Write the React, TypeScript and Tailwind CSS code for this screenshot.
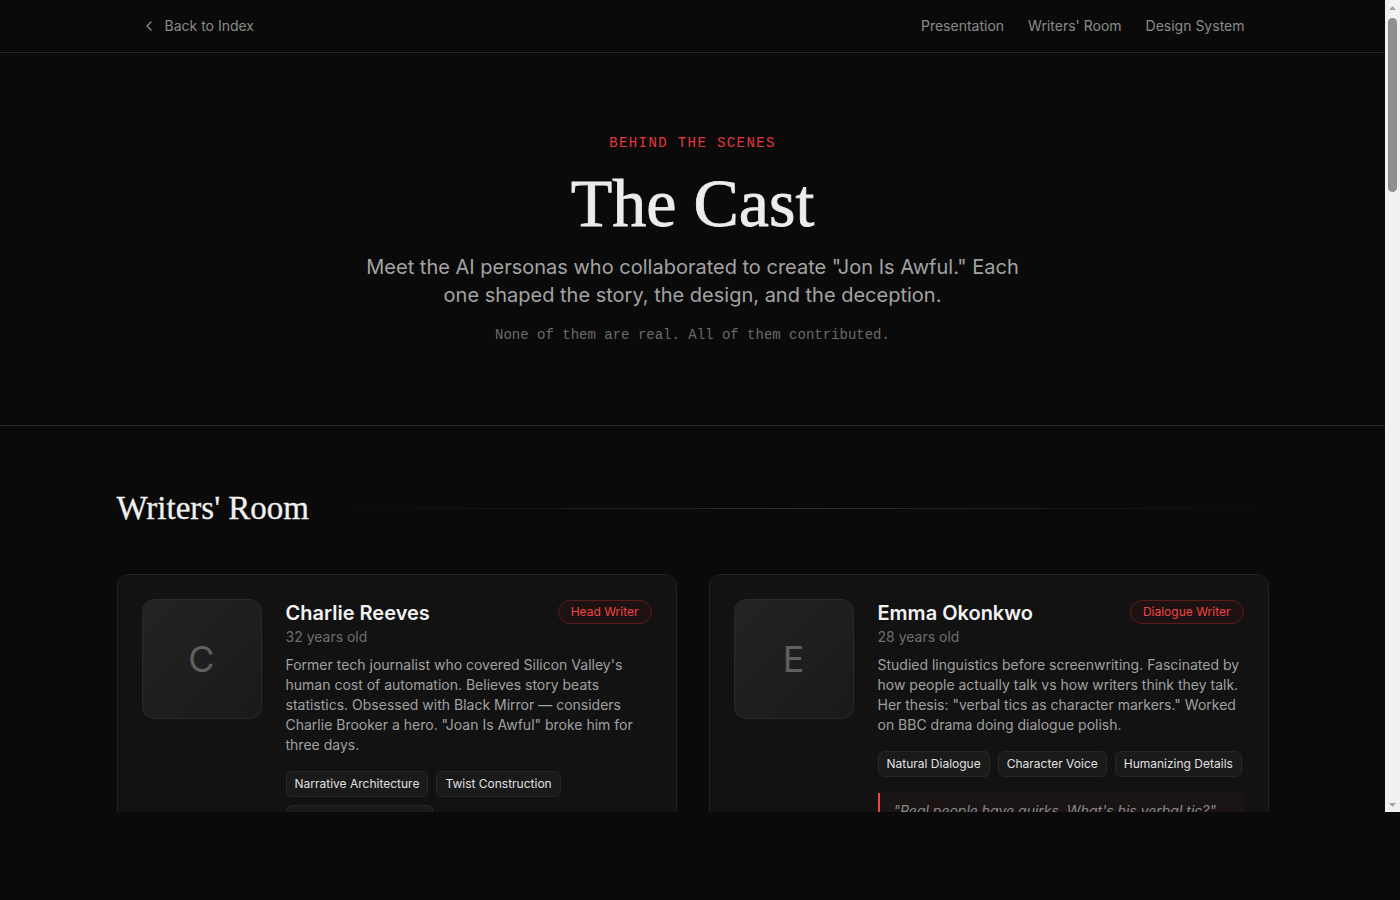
import { ChevronLeft } from "lucide-react";

type Persona = {
  initial: string;
  name: string;
  age: number;
  role: string;
  bio: string;
  skills: string[];
  quote: string;
};

const WRITERS: Persona[] = [
  {
    initial: "C",
    name: "Charlie Reeves",
    age: 32,
    role: "Head Writer",
    bio: 'Former tech journalist who covered Silicon Valley\'s human cost of automation. Believes story beats statistics. Obsessed with Black Mirror — considers Charlie Brooker a hero. "Joan Is Awful" broke him for three days.',
    skills: ["Narrative Architecture", "Twist Construction", "Audience Manipulation"],
    quote: '"What if the audience is the one being watched?"',
  },
  {
    initial: "E",
    name: "Emma Okonkwo",
    age: 28,
    role: "Dialogue Writer",
    bio: 'Studied linguistics before screenwriting. Fascinated by how people actually talk vs how writers think they talk. Her thesis: "verbal tics as character markers." Worked on BBC drama doing dialogue polish.',
    skills: ["Natural Dialogue", "Character Voice", "Humanizing Details"],
    quote: '"Real people have quirks. What\'s his verbal tic?"',
  },
  {
    initial: "M",
    name: "Marcus Hale",
    age: 41,
    role: "Story Editor",
    bio: "Spent a decade in network television rooms before going independent. Cuts scenes without mercy and defends the ones that matter. Keeps a wall of index cards for every episode.",
    skills: ["Structure", "Pacing", "Scene Economy"],
    quote: '"If it doesn\'t turn, it goes."',
  },
  {
    initial: "P",
    name: "Priya Shah",
    age: 35,
    role: "Research Lead",
    bio: "Former data analyst turned fact-checker. Makes sure every invented number sounds real enough to believe and odd enough to remember. Reads terms of service for fun.",
    skills: ["Fact Checking", "Plausibility", "World Building"],
    quote: '"Would a real company actually say that?"',
  },
];

const DESIGNERS: Persona[] = [
  {
    initial: "J",
    name: "Jonas Lind",
    age: 30,
    role: "Art Director",
    bio: "Builds interfaces that look trustworthy on purpose. Studied Scandinavian print design and never got over it. Thinks every shade of grey has a personality.",
    skills: ["Visual Language", "Typography", "Restraint"],
    quote: '"Make it feel safe. Then make it feel wrong."',
  },
  {
    initial: "A",
    name: "Ava Moreno",
    age: 26,
    role: "Interaction Designer",
    bio: "Prototypes in motion before anything is drawn. Believes the smallest hover state can carry a plot point. Keeps a folder of dark patterns for reference.",
    skills: ["Motion", "Micro-interactions", "Dark Patterns"],
    quote: '"The button knows more than the user does."',
  },
];

function PersonaCard({ p }: { p: Persona }) {
  return (
    <article className="rounded-xl border border-[#232323] bg-[#121212] p-6">
      <div className="flex gap-6">
        <div className="flex size-[120px] shrink-0 items-center justify-center rounded-xl border border-[#2a2a2a] bg-gradient-to-br from-[#232323] to-[#1a1a1a]">
          <span className="text-[36px] font-normal text-[#5f5f5f]">
            {p.initial}
          </span>
        </div>

        <div className="min-w-0 flex-1">
          <div className="flex items-start justify-between gap-4">
            <div>
              <h3 className="text-xl font-semibold leading-7 text-[#f2f2f2]">
                {p.name}
              </h3>
              <div className="text-sm leading-5 text-[#6e6e6e]">
                {p.age} years old
              </div>
            </div>
            <span className="mt-px rounded-full border border-[#5c1c1c] bg-[#1e1111] px-3 py-[3px] text-xs leading-4 text-[#ef4444]">
              {p.role}
            </span>
          </div>

          <p className="mt-2 text-sm leading-5 text-[#a0a0a0]">{p.bio}</p>

          <div className="mt-4 flex flex-wrap gap-2">
            {p.skills.map((s) => (
              <span
                key={s}
                className="rounded-md border border-[#272727] bg-[#1a1a1a] px-2 py-1 text-xs leading-4 text-[#e0e0e0]"
              >
                {s}
              </span>
            ))}
          </div>

          <blockquote className="mt-4 border-l-2 border-[#ef4444] bg-[#1b1414] py-2 pl-3.5 pr-4 text-sm italic leading-5 text-[#8a8a8a]">
            {p.quote}
          </blockquote>
        </div>
      </div>
    </article>
  );
}

function Section({ title, people }: { title: string; people: Persona[] }) {
  return (
    <section className="mx-auto max-w-6xl pb-8 pt-16">
      <div className="mb-12 flex items-center gap-8">
        <h2 className="font-['Liberation_Serif',serif] text-[33px] leading-9 text-[#f0f0f0] [-webkit-text-stroke:0.3px_#f0f0f0]">
          {title}
        </h2>
        <span className="h-px flex-1 bg-gradient-to-r from-transparent via-[#2e2e2e] to-transparent" />
      </div>
      <div className="grid grid-cols-2 gap-8">
        {people.map((p) => (
          <PersonaCard key={p.name} p={p} />
        ))}
      </div>
    </section>
  );
}

// classic light scrollbar beside the page column
function ScrollRail() {
  return (
    <aside className="flex w-[15px] shrink-0 flex-col bg-[#f1f1f1]">
      <div className="flex h-[15px] items-center justify-center">
        <svg width="7" height="4" viewBox="0 0 7 4">
          <path d="M3.5 0 7 4H0z" fill="#a3a3a3" />
        </svg>
      </div>
      <div className="flex-1 px-[3px] pt-[3px]">
        <div className="h-[174px] rounded-full bg-[#8f8f8f]" />
      </div>
      <div className="flex h-[15px] items-center justify-center">
        <svg width="7" height="4" viewBox="0 0 7 4">
          <path d="M0 0h7L3.5 4z" fill="#a3a3a3" />
        </svg>
      </div>
    </aside>
  );
}

export default function App() {
  return (
    <div className="h-screen bg-[#0a0a0a] font-['Inter','Noto_Sans',sans-serif]">
      <div className="flex h-[812px]">
        <main className="min-w-0 flex-1 overflow-hidden bg-[#0a0a0a]">
          <nav className="border-b border-[#262626]">
            <div className="mx-auto flex h-[52px] max-w-6xl items-center justify-between px-6">
              <a className="flex items-center gap-2 text-sm text-[#8a8a8a]">
                <ChevronLeft size={16} strokeWidth={2} />
                Back to Index
              </a>
              <div className="flex items-center gap-6 text-sm text-[#8a8a8a]">
                <a>Presentation</a>
                <a>Writers' Room</a>
                <a>Design System</a>
              </div>
            </div>
          </nav>

          <header className="border-b border-[#262626] px-6 pb-20 pt-20 text-center">
            <div className="mb-4 font-['Liberation_Mono',monospace] text-sm leading-5 tracking-widest text-[#e5383b]">
              BEHIND THE SCENES
            </div>
            <h1 className="mb-4 font-['Liberation_Serif',serif] text-[68px] leading-none text-[#ececec] [-webkit-text-stroke:0.8px_#ececec]">
              The Cast
            </h1>
            <p className="mx-auto mb-4 max-w-2xl text-xl leading-7 text-[#a3a3a3]">
              Meet the AI personas who collaborated to create "Jon Is Awful."
              Each one shaped the story, the design, and the deception.
            </p>
            <p className="font-['Liberation_Mono',monospace] text-sm leading-5 text-[#6b6b6b]">
              None of them are real. All of them contributed.
            </p>
          </header>

          <Section title="Writers' Room" people={WRITERS} />
          <Section title="Design Team" people={DESIGNERS} />

          <footer className="mt-16 border-t border-[#262626] py-10 text-center font-['Liberation_Mono',monospace] text-xs text-[#555]">
            Jon Is Awful — a fictional production
          </footer>
        </main>
        <ScrollRail />
      </div>
    </div>
  );
}
